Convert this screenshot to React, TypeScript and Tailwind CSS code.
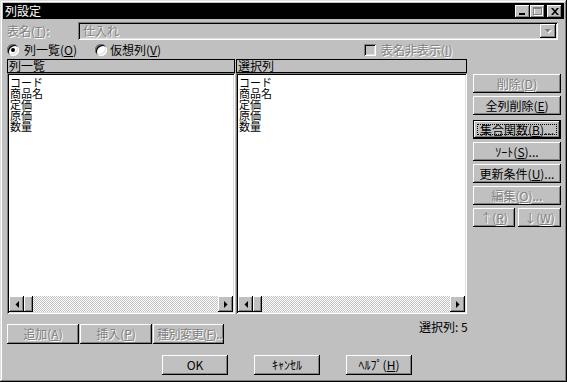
import type React from "react"

const raised = "shadow-[inset_-1px_-1px_#000,inset_1px_1px_#fff,inset_-2px_-2px_#808080]"
const sunken = "shadow-[inset_1px_1px_#808080,inset_-1px_-1px_#fff,inset_2px_2px_#000,inset_-2px_-2px_#dfdfdf]"
const dim = "text-[#808080] [text-shadow:1px_1px_0_#fff]"

function Btn({
  children,
  className = "",
  disabled,
  focus,
}: {
  children: React.ReactNode
  className?: string
  disabled?: boolean
  focus?: boolean
}) {
  if (focus) {
    return (
      <div className={`${className} border border-black bg-[#c0c0c0] flex`}>
        <div className={`flex-1 ${raised} flex p-[3px]`}>
          <div className="flex-1 border border-dotted border-black flex items-center justify-center whitespace-nowrap">
            {children}
          </div>
        </div>
      </div>
    )
  }
  return (
    <div
      className={`${className} ${raised} bg-[#c0c0c0] flex items-center justify-center whitespace-nowrap overflow-hidden ${
        disabled ? dim : "text-black"
      }`}
    >
      {children}
    </div>
  )
}

function Radio({ checked }: { checked?: boolean }) {
  return (
    <div className={`w-[12px] h-[12px] rounded-full bg-white ${sunken} flex items-center justify-center`}>
      {checked && <div className="w-[4px] h-[4px] rounded-full bg-black" />}
    </div>
  )
}

function Arrow({ dir }: { dir: "l" | "r" }) {
  return (
    <div className={`w-[15px] h-full ${raised} bg-[#c0c0c0] flex items-center justify-center`}>
      <svg width="4" height="7" viewBox="0 0 4 7">
        {dir === "l" ? <polygon points="4,0 4,7 0.5,3.5" fill="#000" /> : <polygon points="0,0 0,7 3.5,3.5" fill="#000" />}
      </svg>
    </div>
  )
}

function ListPane({ title, width, items }: { title: string; width: string; items: string[] }) {
  return (
    <div className={`${width} flex flex-col`}>
      <div className="h-[14px] border border-black bg-[#c0c0c0] pl-[1px] flex items-center text-black">{title}</div>
      <div className={`h-[241px] bg-white ${sunken} flex flex-col p-[2px]`}>
        <div className="flex flex-col pt-[2px] pl-[1px] text-[11px] leading-[11px] text-black">
          {items.map((it) => (
            <div key={it} className="h-[11px]">
              {it}
            </div>
          ))}
        </div>
        <div className="mt-auto h-[16px] flex">
          <Arrow dir="l" />
          <div className={`w-[9px] h-full ${raised} bg-[#c0c0c0]`} />
          <div className="flex-1 h-full bg-[repeating-conic-gradient(#c0c0c0_0_25%,#fff_0_50%)] bg-[length:2px_2px]" />
          <Arrow dir="r" />
        </div>
      </div>
    </div>
  )
}

const cols = ["コード", "商品名", "定価", "原価", "数量"]

export default function App() {
  return (
    <div className="w-[567px] h-[382px] bg-[#c0c0c0] p-[3px] flex flex-col font-['Noto_Sans_CJK_JP',sans-serif] text-[12px] leading-[12px] shadow-[inset_-1px_-1px_#000,inset_1px_1px_#dfdfdf,inset_-2px_-2px_#808080,inset_2px_2px_#fff]">
      {/* title bar */}
      <div className="h-[16px] bg-black flex items-center pl-[2px] pr-[2px]">
        <span className="text-white">列設定</span>
        <div className="ml-auto flex items-center">
          <div className={`w-[15px] h-[13px] ${raised} bg-[#c0c0c0] flex items-end pl-[4px] pb-[3px]`}>
            <div className="w-[6px] h-[2px] bg-black" />
          </div>
          <div className={`w-[15px] h-[13px] ${raised} bg-[#c0c0c0] flex items-center justify-center`}>
            <svg width="10" height="9" viewBox="0 0 10 9">
              <rect x="1.5" y="1.5" width="8" height="7" fill="none" stroke="#fff" />
              <rect x="0.5" y="0.5" width="8" height="7" fill="none" stroke="#808080" />
              <line x1="0" y1="1.5" x2="9" y2="1.5" stroke="#808080" />
            </svg>
          </div>
          <div className={`ml-[2px] w-[15px] h-[13px] ${raised} bg-[#c0c0c0] flex items-center justify-center`}>
            <svg width="8" height="7" viewBox="0 0 8 7">
              <path d="M0 0 L2 0 L4 2.3 L6 0 L8 0 L5 3.5 L8 7 L6 7 L4 4.7 L2 7 L0 7 L3 3.5 Z" fill="#000" />
            </svg>
          </div>
        </div>
      </div>

      <div className="flex flex-col pl-[4px]">
        {/* table name */}
        <div className="mt-[3px] h-[18px] flex items-center">
          <div className={`w-[71px] ${dim}`}>
            表名(<u>T</u>):
          </div>
          <div className={`w-[480px] h-[18px] ${sunken} bg-[#c0c0c0] flex items-center pl-[5px] pr-[2px]`}>
            <span className={dim}>仕入れ</span>
            <div className={`ml-auto w-[16px] h-[14px] ${raised} bg-[#c0c0c0] flex items-center justify-center`}>
              <svg width="8" height="5" viewBox="0 0 8 5">
                <polygon points="1.5,1 8,1 4.75,4.5" fill="#fff" />
                <polygon points="0.5,0 7,0 3.75,3.5" fill="#808080" />
              </svg>
            </div>
          </div>
        </div>

        {/* radio row */}
        <div className="mt-[3px] h-[14px] flex items-center">
          <div className="w-[88px] flex items-center gap-[5px]">
            <Radio checked />
            <span>
              列一覧(<u>O</u>)
            </span>
          </div>
          <div className="w-[269px] flex items-center gap-[3px]">
            <Radio />
            <span>
              仮想列(<u>V</u>)
            </span>
          </div>
          <div className="flex items-center gap-[5px]">
            <div className={`w-[12px] h-[12px] ${sunken} bg-[#c0c0c0]`} />
            <span className={dim}>
              表名非表示(<u>I</u>)
            </span>
          </div>
        </div>

        {/* lists + side buttons */}
        <div className="mt-[2px] flex">
          <ListPane title="列一覧" width="w-[228px]" items={cols} />
          <div className="w-[1px]" />
          <ListPane title="選択列" width="w-[231px]" items={cols} />
          <div className="ml-[6px] w-[88px] flex flex-col pt-[15px]">
            <Btn className="h-[19px]" disabled>
              削除(<u>D</u>)
            </Btn>
            <Btn className="mt-[3px] h-[19px]">
              全列削除(<u>E</u>)
            </Btn>
            <Btn className="mt-[5px] h-[19px]" focus>
              集合関数(<u>B</u>)...
            </Btn>
            <Btn className="mt-[3px] h-[19px]">
              ｿｰﾄ(<u>S</u>)...
            </Btn>
            <Btn className="mt-[3px] h-[19px]">
              更新条件(<u>U</u>)...
            </Btn>
            <Btn className="mt-[3px] h-[19px]" disabled>
              編集(<u>O</u>)...
            </Btn>
            <div className="mt-[3px] flex gap-[3px]">
              <Btn className="w-[42px] h-[19px]" disabled>
                ↑(<u>R</u>)
              </Btn>
              <Btn className="w-[43px] h-[19px]" disabled>
                ↓(<u>W</u>)
              </Btn>
            </div>
          </div>
        </div>

        {/* bottom edit buttons */}
        <div className="mt-[10px] h-[20px] flex items-start">
          <Btn className="w-[72px] h-[20px]" disabled>
            追加(<u>A</u>)
          </Btn>
          <Btn className="ml-[1px] w-[72px] h-[20px]" disabled>
            挿入(<u>P</u>)
          </Btn>
          <Btn className="ml-[1px] w-[71px] h-[20px] justify-start pl-[4px] tracking-[-0.5px]" disabled>
            種別変更(<u>F</u>)..
          </Btn>
          <div className="ml-[195px] -mt-[3px] text-black">選択列: 5</div>
        </div>

        {/* dialog buttons */}
        <div className="mt-[11px] h-[20px] flex">
          <Btn className="ml-[155px] w-[66px] h-[20px]">OK</Btn>
          <Btn className="ml-[26px] w-[66px] h-[20px]">ｷｬﾝｾﾙ</Btn>
          <Btn className="ml-[26px] w-[66px] h-[20px]">
            ﾍﾙﾌﾟ(<u>H</u>)
          </Btn>
        </div>
      </div>
    </div>
  )
}
